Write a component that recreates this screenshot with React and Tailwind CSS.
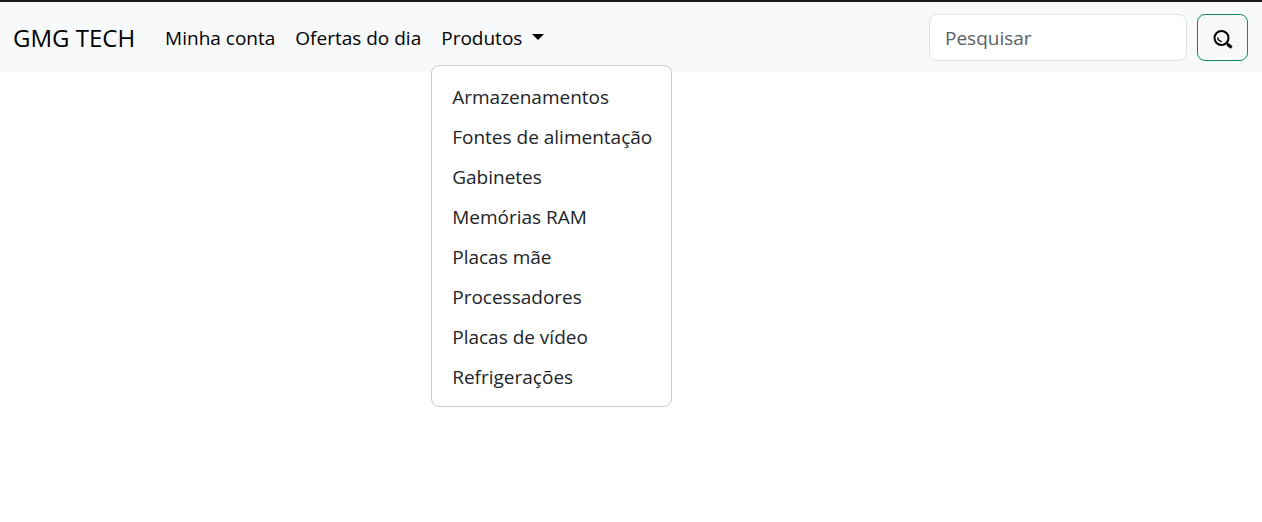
const categories = [
  'Armazenamentos',
  'Fontes de alimentação',
  'Gabinetes',
  'Memórias RAM',
  'Placas mãe',
  'Processadores',
  'Placas de vídeo',
  'Refrigerações',
];

function SearchIcon() {
  return (
    <svg viewBox="0 0 20 20" className="h-5 w-5" fill="none" stroke="#000" aria-hidden="true">
      <circle cx="8.5" cy="8" r="7" strokeWidth="2" />
      <path d="M4.6 7.4 Q5 11.2 8.8 11.6" strokeWidth="1.3" />
      <path d="M13 12.6 L15 14.6" strokeWidth="1.6" />
      <path d="M14.6 14.2 L18.6 17.6" strokeWidth="3.2" />
    </svg>
  );
}

function ProductsMenu() {
  return (
    <li className="relative">
      <button type="button" aria-haspopup="true" aria-expanded="true" className="flex items-center px-[10px] py-2">
        Produtos
        <svg viewBox="0 0 12 6" className="mb-[2px] ml-[10px] h-[6px] w-3" aria-hidden="true">
          <path d="M0 0 H12 L6 6 Z" fill="#000" />
        </svg>
      </button>
      <ul className="absolute left-0 top-full z-10 mt-1 w-[241px] rounded-lg border border-[#cccccc] bg-white pt-[11px] pb-[9px] text-[#212529]">
        {categories.map((name) => (
          <li key={name}>
            <a href="#" className="block whitespace-nowrap px-5 py-[5px]">{name}</a>
          </li>
        ))}
      </ul>
    </li>
  );
}

export default function App() {
  return (
    <div className="min-h-screen bg-white font-['Segoe_UI','Open_Sans',sans-serif] text-[19px] leading-[30px] font-normal text-black">
      <nav className="flex items-center border-t-2 border-[#1e1c20] bg-[#f8f9fa] pt-3 pb-[11px] pr-[14px] pl-[13px]">
        <a href="#" className="mr-5 whitespace-nowrap text-[24px]">GMG TECH</a>
        <ul className="flex items-center whitespace-nowrap">
          <li><a href="#" className="block px-[10px] py-2">Minha conta</a></li>
          <li><a href="#" className="block px-[10px] py-2">Ofertas do dia</a></li>
          <ProductsMenu />
        </ul>
        <form role="search" className="ml-auto flex gap-[10px]" onSubmit={(e) => e.preventDefault()}>
          <input
            type="search"
            aria-label="Pesquisar"
            placeholder="Pesquisar"
            className="h-[47px] w-[258px] rounded-lg border border-[#dee2e6] bg-white px-[15px] placeholder:text-[#5a6066] placeholder:opacity-100"
          />
          <button
            type="submit"
            aria-label="Buscar"
            className="flex h-[47px] w-[51px] items-center justify-center rounded-lg border border-[#198754] pt-[5px]"
          >
            <SearchIcon />
          </button>
        </form>
      </nav>
    </div>
  );
}
